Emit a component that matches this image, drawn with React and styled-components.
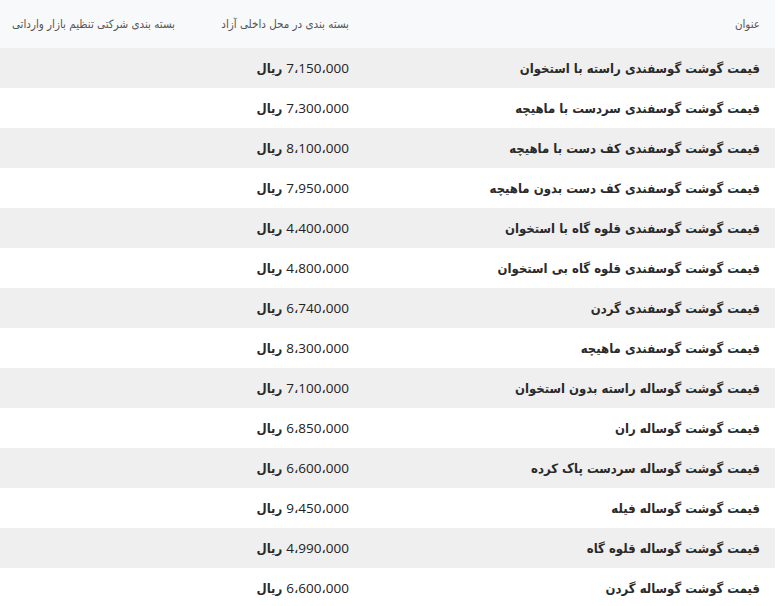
import React from "react";
import styled, { createGlobalStyle } from "styled-components";

const Global = createGlobalStyle`
  html, body { margin: 0; padding: 0; background: #fff; }
  body { font-family: "DejaVu Sans Condensed", "DejaVu Sans", sans-serif; }
`;

const Wrap = styled.div`
  width: 775px;
  direction: rtl;
`;

const Table = styled.table`
  width: 775px;
  border-collapse: collapse;
  table-layout: fixed;
`;

const HeadRow = styled.tr`
  background: #f8f9fa;
  height: 48px;
`;

const Th = styled.th`
  box-sizing: border-box;
  width: ${(p) => p.$w}px;
  padding: 0 15px;
  text-align: right;
  font-weight: 400;
  font-size: 11.5px;
  color: #555;
  white-space: nowrap;
  overflow: visible;
`;

const Row = styled.tr`
  height: 40px;
  background: ${(p) => (p.$odd ? "#efefef" : "#ffffff")};
`;

const Td = styled.td`
  padding: 0 15px;
  text-align: right;
  font-size: 13px;
  font-weight: 700;
  color: #2a2a2a;
  white-space: nowrap;
`;

const Price = styled.span`
  font-family: "Open Sans", "DejaVu Sans", sans-serif;
  font-weight: 500;
  font-size: 13.5px;
  color: #222;
`;

const rows = [
  ["قیمت گوشت گوسفندی راسته با استخوان", "7،150،000"],
  ["قیمت گوشت گوسفندی سردست با ماهیچه", "7،300،000"],
  ["قیمت گوشت گوسفندی کف دست با ماهیچه", "8،100،000"],
  ["قیمت گوشت گوسفندی کف دست بدون ماهیچه", "7،950،000"],
  ["قیمت گوشت گوسفندی قلوه گاه با استخوان", "4،400،000"],
  ["قیمت گوشت گوسفندی قلوه گاه بی استخوان", "4،800،000"],
  ["قیمت گوشت گوسفندی گردن", "6،740،000"],
  ["قیمت گوشت گوسفندی ماهیچه", "8،300،000"],
  ["قیمت گوشت گوساله راسته بدون استخوان", "7،100،000"],
  ["قیمت گوشت گوساله ران", "6،850،000"],
  ["قیمت گوشت گوساله سردست پاک کرده", "6،600،000"],
  ["قیمت گوشت گوساله فیله", "9،450،000"],
  ["قیمت گوشت گوساله قلوه گاه", "4،990،000"],
  ["قیمت گوشت گوساله گردن", "6،600،000"],
];

export default function App() {
  return (
    <>
      <Global />
      <Wrap>
        <Table>
          <thead>
            <HeadRow>
              <Th $w={411}>عنوان</Th>
              <Th $w={174}>بسته بندی در محل داخلی آزاد</Th>
              <Th $w={190}>بسته بندی شرکتی تنظیم بازار وارداتی</Th>
            </HeadRow>
          </thead>
          <tbody>
            {rows.map(([name, price], i) => (
              <Row key={i} $odd={i % 2 === 0}>
                <Td>{name}</Td>
                <Td>
                  <Price>{price}</Price> ریال
                </Td>
                <Td></Td>
              </Row>
            ))}
          </tbody>
        </Table>
      </Wrap>
    </>
  );
}
